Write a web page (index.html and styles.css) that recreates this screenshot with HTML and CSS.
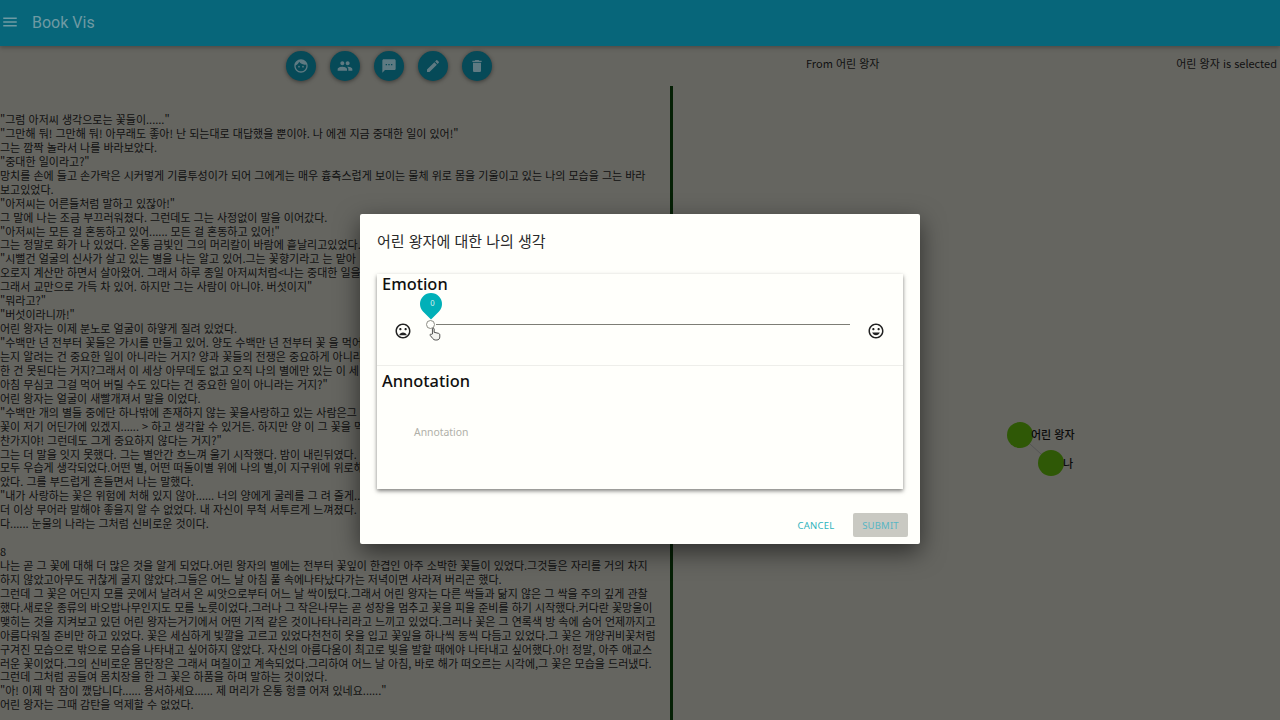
FILE: index.html
```html
<!DOCTYPE html>
<html lang="ko">
<head>
  <meta charset="UTF-8">
  <meta name="viewport" content="width=device-width, initial-scale=1.0">
  <title>Book Vis</title>
  <link rel="stylesheet" href="styles.css">
</head>
<body>
  <!-- App bar -->
  <header class="appbar">
    <svg class="menu-icon" viewBox="0 0 24 24"><path d="M3 18h18v-2H3v2zm0-5h18v-2H3v2zm0-7v2h18V6H3z"/></svg>
    <span class="app-title">Book Vis</span>
  </header>

  <!-- Toolbar -->
  <div class="toolbar">
    <div class="actions">
      <button class="fab"><svg viewBox="0 0 24 24"><path d="M9 11.75a1.25 1.25 0 1 0 0 2.5 1.25 1.25 0 0 0 0-2.5zm6 0a1.25 1.25 0 1 0 0 2.5 1.25 1.25 0 0 0 0-2.5zM12 2C6.48 2 2 6.48 2 12s4.48 10 10 10 10-4.48 10-10S17.52 2 12 2zm0 18c-4.41 0-8-3.59-8-8 0-.29.02-.58.05-.86 2.36-1.05 4.23-2.98 5.21-5.37C11.07 8.33 14.05 10 17.42 10c.78 0 1.53-.09 2.25-.26.21.71.33 1.47.33 2.26 0 4.41-3.59 8-8 8z"/></svg></button>
      <button class="fab"><svg viewBox="0 0 24 24"><path d="M16 11c1.66 0 2.99-1.34 2.99-3S17.66 5 16 5c-1.66 0-3 1.34-3 3s1.34 3 3 3zm-8 0c1.66 0 2.99-1.34 2.99-3S9.66 5 8 5C6.34 5 5 6.34 5 8s1.34 3 3 3zm0 2c-2.33 0-7 1.17-7 3.5V19h14v-2.5c0-2.33-4.67-3.5-7-3.5zm8 0c-.29 0-.62.02-.97.05 1.16.84 1.97 1.97 1.97 3.45V19h6v-2.5c0-2.33-4.67-3.5-7-3.5z"/></svg></button>
      <button class="fab"><svg viewBox="0 0 24 24"><path d="M20 2H4c-1.1 0-1.99.9-1.99 2L2 22l4-4h14c1.1 0 2-.9 2-2V4c0-1.1-.9-2-2-2zM9 11H7V9h2v2zm4 0h-2V9h2v2zm4 0h-2V9h2v2z"/></svg></button>
      <button class="fab"><svg viewBox="0 0 24 24"><path d="M3 17.25V21h3.75L17.81 9.94l-3.75-3.75L3 17.25zM20.71 7.04c.39-.39.39-1.02 0-1.41l-2.34-2.34c-.39-.39-1.02-.39-1.41 0l-1.83 1.83 3.75 3.75 1.83-1.83z"/></svg></button>
      <button class="fab"><svg viewBox="0 0 24 24"><path d="M6 19c0 1.1.9 2 2 2h8c1.1 0 2-.9 2-2V7H6v12zM19 4h-3.5l-1-1h-5l-1 1H5v2h14V4z"/></svg></button>
    </div>
    <span class="from-label">From 어린 왕자</span>
    <span class="selected-label">어린 왕자 is selected</span>
  </div>

  <!-- Book text + graph -->
  <main class="content">
    <section class="book-text">
      <p>"그럼 아저씨 생각으로는 꽃들이......"<br>
"그만해 둬! 그만해 둬! 아무래도 좋아! 난 되는대로 대답했을 뿐이야. 나 에겐 지금 중대한 일이 있어!"<br>
그는 깜짝 놀라서 나를 바라보았다.<br>
"중대한 일이라고?"<br>
망치를 손에 들고 손가락은 시커멓게 기름투성이가 되어 그에게는 매우 흉측스럽게 보이는 물체 위로 몸을 기울이고 있는 나의 모습을 그는 바라<br>
보고있었다.<br>
"아저씨는 어른들처럼 말하고 있잖아!"<br>
그 말에 나는 조금 부끄러워졌다. 그런데도 그는 사정없이 말을 이어갔다.<br>
"아저씨는 모든 걸 혼동하고 있어...... 모든 걸 혼동하고 있어!"<br>
그는 정말로 화가 나 있었다. 온통 금빛인 그의 머리칼이 바람에 흩날리고있었다.<br>
"시뻘건 얼굴의 신사가 살고 있는 별을 나는 알고 있어.그는 꽃향기라고 는 맡아<br>
오로지 계산만 하면서 살아왔어. 그래서 하루 종일 아저씨처럼&lt;나는 중대한 일을<br>
그래서 교만으로 가득 차 있어. 하지만 그는 사람이 아니야. 버섯이지"<br>
"뭐라고?"<br>
"버섯이라니까!"<br>
어린 왕자는 이제 분노로 얼굴이 하얗게 질려 있었다.<br>
"수백만 년 전부터 꽃들은 가시를 만들고 있어. 양도 수백만 년 전부터 꽃 을 먹어<br>
는지 알려는 건 중요한 일이 아니라는 거지? 양과 꽃들의 전쟁은 중요하게 아니라<br>
한 건 못된다는 거지?그래서 이 세상 아무데도 없고 오직 나의 별에만 있는 이 세<br>
아침 무심코 그걸 먹어 버릴 수도 있다는 건 중요한 일이 아니라는 거지?"<br>
어린 왕자는 얼굴이 새빨개져서 말을 이었다.<br>
"수백만 개의 별들 중에단 하나밖에 존재하지 않는 꽃을사랑하고 있는 사람은그<br>
꽃이 저기 어딘가에 있겠지...... &gt; 하고 생각할 수 있거든. 하지만 양 이 그 꽃을 먹<br>
찬가지야! 그런데도 그게 중요하지 않다는 거지?"<br>
그는 더 말을 잇지 못했다. 그는 별안간 흐느껴 울기 시작했다. 밤이 내린뒤였다.<br>
모두 우습게 생각되었다.어떤 별, 어떤 떠돌이별 위에 나의 별,이 지구위에 위로해<br>
았다. 그를 부드럽게 흔들면서 나는 말했다.<br>
"내가 사랑하는 꽃은 위험에 처해 있지 않아...... 너의 양에게 굴레를 그 려 줄게...<br>
더 이상 무어라 말해야 좋을지 알 수 없었다. 내 자신이 무척 서투르게 느껴졌다.<br>
다...... 눈물의 나라는 그처럼 신비로운 것이다.</p>
      <p class="chapter">8</p>
      <p>나는 곧 그 꽃에 대해 더 많은 것을 알게 되었다.어린 왕자의 별에는 전부터 꽃잎이 한겹인 아주 소박한 꽃들이 있었다.그것들은 자리를 거의 차지<br>
하지 않았고아무도 귀찮게 굴지 않았다.그들은 어느 날 아침 풀 속에나타났다가는 저녁이면 사라져 버리곤 했다.<br>
그런데 그 꽃은 어딘지 모를 곳에서 날려서 온 씨앗으로부터 어느 날 싹이텄다.그래서 어린 왕자는 다른 싹들과 닮지 않은 그 싹을 주의 깊게 관찰<br>
했다.새로운 종류의 바오밥나무인지도 모를 노릇이었다.그러나 그 작은나무는 곧 성장을 멈추고 꽃을 피울 준비를 하기 시작했다.커다란 꽃망울이<br>
맺히는 것을 지켜보고 있던 어린 왕자는거기에서 어떤 기적 같은 것이나타나리라고 느끼고 있었다.그러나 꽃은 그 연록색 방 속에 숨어 언제까지고<br>
아름다워질 준비만 하고 있었다. 꽃은 세심하게 빛깔을 고르고 있었다천천히 옷을 입고 꽃잎을 하나씩 동씩 다듬고 있었다.그 꽃은 개양귀비꽃처럼<br>
구겨진 모습으로 밖으로 모습을 나타내고 싶어하지 않았다. 자신의 아름다움이 최고로 빛을 발할 때에야 나타내고 싶어했다.아! 정말, 아주 애교스<br>
러운 꽃이었다.그의 신비로운 몸단장은 그래서 며칠이고 계속되었다.그리하여 어느 날 아침, 바로 해가 떠오르는 시각에,그 꽃은 모습을 드러냈다.<br>
그런데 그처럼 공들여 몸치장을 한 그 꽃은 하품을 하며 말하는 것이었다.<br>
"아! 이제 막 잠이 깼답니다...... 용서하세요...... 제 머리가 온통 헝클 어져 있네요......"<br>
어린 왕자는 그때 감탄을 억제할 수 없었다.</p>
    </section>
    <div class="divider"></div>
    <section class="graph">
      <svg class="graph-svg" viewBox="0 0 607 634">
        <line class="link" x1="347" y1="349" x2="378" y2="377"/>
        <circle class="node" cx="347" cy="349" r="13"/>
        <circle class="node" cx="378" cy="377" r="13"/>
        <text class="node-label" x="358" y="353">어린 왕자</text>
        <text class="node-label" x="390" y="382">나</text>
      </svg>
    </section>
  </main>

  <!-- Dialog -->
  <div class="scrim">
    <div class="dialog">
      <h2 class="dialog-title">어린 왕자에 대한 나의 생각</h2>
      <div class="card">
        <div class="card-section emotion">
          <h3>Emotion</h3>
          <div class="slider-row">
            <svg class="mood" viewBox="0 0 24 24"><path d="M11.99 2C6.47 2 2 6.48 2 12s4.47 10 9.99 10C17.52 22 22 17.52 22 12S17.52 2 11.99 2zM12 20c-4.42 0-8-3.58-8-8s3.58-8 8-8 8 3.58 8 8-3.58 8-8 8zm3.5-9c.83 0 1.5-.67 1.5-1.5S16.33 8 15.5 8 14 8.67 14 9.5s.67 1.5 1.5 1.5zm-7 0c.83 0 1.5-.67 1.5-1.5S9.33 8 8.5 8 7 8.67 7 9.5 7.67 11 8.5 11zm3.5 3c-2.33 0-4.31 1.46-5.11 3.5h10.22c-.8-2.04-2.78-3.5-5.11-3.5z"/></svg>
            <div class="slider">
              <div class="slider-track"></div>
              <div class="slider-thumb"></div>
              <div class="slider-pin"><span>0</span></div>
              <svg class="hand-cursor" viewBox="0 0 14 16"><path d="M4 8V2.2c0-1.4 2-1.4 2 0V6l5 1.2c1.2.3 1.6 1 1.6 2v2.2c0 2-1.2 3.6-3.4 3.6H7.400C6 15 5.200 14.400 4.500 13.400L1.500 9.800c-.9-1.100.5-2.300 1.500-1.400z"/></svg>
            </div>
            <svg class="mood" viewBox="0 0 24 24"><path d="M11.99 2C6.47 2 2 6.48 2 12s4.47 10 9.99 10C17.52 22 22 17.52 22 12S17.52 2 11.99 2zM12 20c-4.42 0-8-3.58-8-8s3.58-8 8-8 8 3.58 8 8-3.58 8-8 8zm3.5-9c.83 0 1.5-.67 1.5-1.5S16.33 8 15.5 8 14 8.67 14 9.5s.67 1.5 1.5 1.5zm-7 0c.83 0 1.5-.67 1.5-1.5S9.33 8 8.5 8 7 8.67 7 9.5 7.67 11 8.5 11zm3.5 6.5c2.33 0 4.31-1.46 5.11-3.5H6.89c.8 2.04 2.78 3.5 5.11 3.5z"/></svg>
          </div>
        </div>
        <div class="card-section annotation">
          <h3>Annotation</h3>
          <div class="annotation-placeholder">Annotation</div>
        </div>
      </div>
      <div class="dialog-actions">
        <button class="text-btn">CANCEL</button>
        <button class="text-btn submit">SUBMIT</button>
      </div>
    </div>
  </div>
</body>
</html>
```

FILE: styles.css
```css
* {
  box-sizing: border-box;
}
body {
  margin: 0;
  width: 1280px;
  height: 720px;
  overflow: hidden;
  background: #656560;
  color: #101010;
  font-family: "Noto Sans CJK KR", "Noto Sans", sans-serif;
}
.appbar {
  display: flex;
  align-items: center;
  height: 46px;
  padding-bottom: 2px;
  background: #07667a;
  box-shadow: 0 2px 4px rgba(0, 0, 0, 0.25);
}
.menu-icon {
  width: 18px;
  height: 18px;
  margin-left: 1px;
  fill: #6f9aa3;
}
.app-title {
  margin-left: 13px;
  font-family: Roboto, sans-serif;
  font-size: 16px;
  color: #6f9aa3;
}
.toolbar {
  display: flex;
  align-items: center;
  height: 40px;
  padding: 0 3px 0 286px;
  font-size: 11px;
}
.actions {
  display: flex;
  gap: 14px;
  width: 520px;
}
.fab {
  display: flex;
  align-items: center;
  justify-content: center;
  width: 30px;
  height: 30px;
  padding: 0;
  border: none;
  border-radius: 50%;
  background: #064a58;
  box-shadow: 0 1px 4px rgba(0, 0, 0, 0.45);
}
.fab svg {
  width: 16px;
  height: 16px;
  fill: #5f7a82;
}
.from-label,
.selected-label {
  margin-bottom: 6px;
}
.selected-label {
  margin-left: auto;
}
.content {
  display: flex;
  height: 634px;
}
.book-text {
  width: 670px;
  padding-top: 27px;
  overflow: hidden;
  white-space: nowrap;
  font-size: 11px;
  line-height: 13.93px;
}
.book-text p {
  margin: 0;
}
.book-text .chapter {
  margin-top: 13.93px;
}
.divider {
  width: 3px;
  background: #052005;
}
.graph {
  flex: 1;
}
.graph-svg {
  display: block;
  width: 100%;
  height: 100%;
}
.link {
  stroke: #555;
}
.node {
  fill: #2f5806;
}
.node-label {
  font-size: 11px;
  font-weight: 500;
  fill: #0a0a0a;
}

/* dialog */
.scrim {
  position: absolute;
  top: 0;
  left: 0;
  width: 100%;
  height: 100%;
  display: flex;
  justify-content: center;
  padding-top: 214px;
}
.dialog {
  width: 560px;
  height: 330px;
  padding: 0 17px;
  border-radius: 2px;
  background: #fffffb;
  box-shadow: 0 8px 24px rgba(0, 0, 0, 0.55);
}
.dialog-title {
  margin: 0;
  padding: 16px 0 22px;
  font-size: 15px;
  font-weight: 400;
  line-height: 22px;
  color: #2a2a2a;
}
.card {
  width: 526px;
  height: 215px;
  background: #fffffb;
  box-shadow: 0 2px 4px rgba(0, 0, 0, 0.5);
}
.card-section {
  padding: 0 5px;
}
.card-section h3 {
  margin: 0;
  font-family: "Noto Sans", sans-serif;
  font-size: 16.4px;
  font-weight: 500;
  line-height: 20px;
}
.emotion {
  height: 92px;
  border-bottom: 1px solid #eeeeea;
}
.slider-row {
  display: flex;
  align-items: flex-start;
  padding-left: 12px;
}
.mood {
  width: 18px;
  height: 18px;
  margin-top: 28px;
  fill: #222;
}
.slider {
  position: relative;
  width: 430px;
  height: 60px;
  margin: 0 13px 0 12px;
}
.slider-track {
  position: absolute;
  top: 30px;
  left: 12px;
  width: 414px;
  height: 1px;
  background: #7d7d75;
}
.slider-thumb {
  position: absolute;
  top: 26px;
  left: 2px;
  width: 9px;
  height: 9px;
  border: 1px solid #8d8d85;
  border-radius: 50%;
  background: #fffffb;
}
.slider-pin {
  position: absolute;
  top: -1px;
  left: -4px;
  width: 22px;
  height: 22px;
  border-radius: 50% 50% 0 50%;
  background: #00b0b8;
  transform: rotate(45deg);
}
.slider-pin span {
  display: block;
  transform: rotate(-45deg);
  font-size: 8px;
  line-height: 18px;
  text-align: center;
  color: #d8eeee;
}
.hand-cursor {
  position: absolute;
  top: 33px;
  left: 5px;
  width: 12px;
  height: 14px;
  fill: #f4f4f0;
  stroke: #333;
  stroke-width: 1;
}
.annotation {
  padding-top: 5px;
}
.annotation-placeholder {
  margin: 34px 0 0 32px;
  font-family: "Noto Sans", sans-serif;
  font-size: 10.4px;
  line-height: 14px;
  color: #b0b0a8;
}
.dialog-actions {
  display: flex;
  justify-content: flex-end;
  align-items: center;
  gap: 14px;
  margin-top: 24px;
  margin-right: -5px;
}
.text-btn {
  width: 46px;
  height: 24px;
  padding: 0;
  border: none;
  border-radius: 2px;
  background: transparent;
  font-family: "Noto Sans", sans-serif;
  font-size: 9.5px;
  letter-spacing: 0.2px;
  color: #2fb4bd;
}
.submit {
  width: 55px;
  background: #c9c9c2;
  color: #58b6c4;
}
```
